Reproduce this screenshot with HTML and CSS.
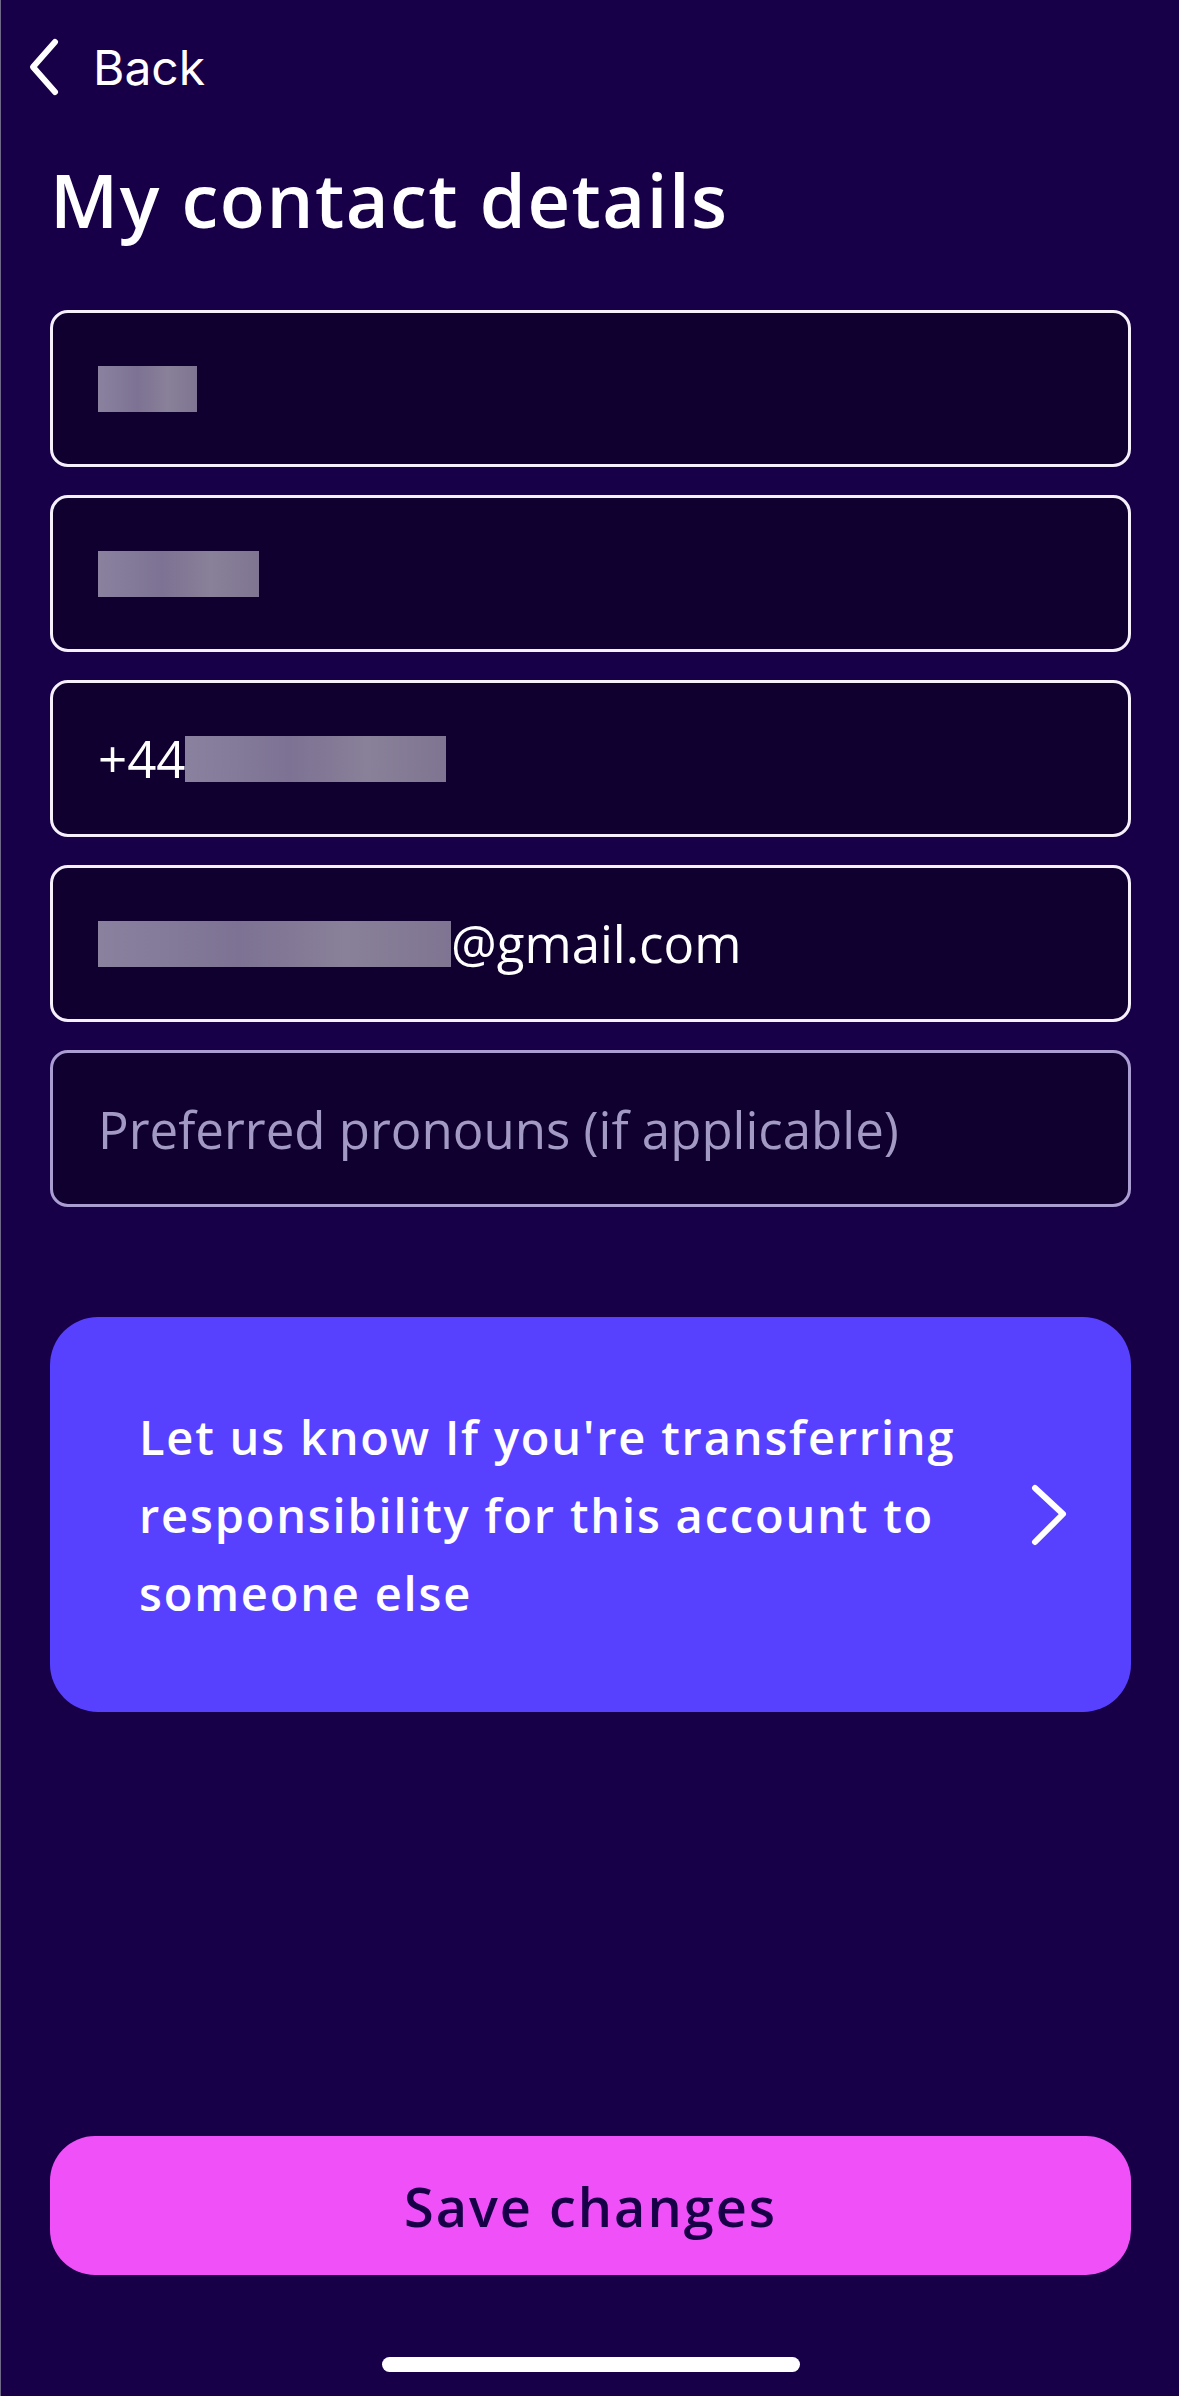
FILE: index.html
```html
<!DOCTYPE html>
<html lang="en">
<head>
    <meta charset="UTF-8">
    <meta name="viewport" content="width=device-width, initial-scale=1.0">
    <title>My contact details</title>
    <link rel="stylesheet" href="styles.css">
</head>
<body>
    <div class="page">
        <a class="back" href="#">
            <svg class="back-icon" width="40" height="60" viewBox="0 0 40 60">
                <path d="M30 12 L8 37 L30 62" fill="none" stroke="#fff" stroke-width="6" stroke-linecap="round" stroke-linejoin="round" transform="translate(0 -7)"/>
            </svg>
            <span>Back</span>
        </a>

        <h1>My contact details</h1>

        <div class="fields">
            <div class="field"><span class="blur" style="width: 99px"></span></div>
            <div class="field"><span class="blur" style="width: 161px"></span></div>
            <div class="field"><span class="value">+44</span><span class="blur" style="width: 261px"></span></div>
            <div class="field"><span class="blur" style="width: 353px"></span><span class="value">@gmail.com</span></div>
            <div class="field empty"><span class="placeholder">Preferred pronouns (if applicable)</span></div>
        </div>

        <a class="transfer-card" href="#">
            <span class="transfer-text">Let us know If you're transferring responsibility for this account to someone else</span>
            <svg class="chevron" width="40" height="64" viewBox="0 0 40 64">
                <path d="M6 5 L34 31 L6 59" fill="none" stroke="#fff" stroke-width="6" stroke-linecap="round" stroke-linejoin="round"/>
            </svg>
        </a>

        <div class="footer">
            <button class="save-btn">Save changes</button>
            <div class="home-indicator"></div>
        </div>
    </div>
</body>
</html>
```

FILE: styles.css
```css
* {
    box-sizing: border-box;
}
body {
    margin: 0;
    padding: 0;
    background-color: #180048;
    color: #fff;
    font-family: 'Open Sans', sans-serif;
}
.page {
    width: 1179px;
    height: 2396px;
    display: flex;
    flex-direction: column;
    border-left: 1px solid #6f6788;
}
.back {
    display: flex;
    align-items: center;
    height: 134px;
    padding-left: 24px;
    color: #fff;
    text-decoration: none;
    font-family: 'Inter', sans-serif;
    font-size: 48px;
}
.back-icon {
    margin-right: 28px;
}
h1 {
    margin: 16px 0 0 0;
    padding-left: 49px;
    font-size: 74px;
    line-height: 100px;
    font-weight: 600;
    letter-spacing: 1.5px;
    color: #fff;
}
.fields {
    display: flex;
    flex-direction: column;
    gap: 28px;
    margin: 60px 48px 0 49px;
}
.field {
    height: 157px;
    border: 3px solid #f5f0fb;
    border-radius: 18px;
    background-color: #10002f;
    display: flex;
    align-items: center;
    padding-left: 45px;
    font-size: 51px;
}
.field.empty {
    border-color: #a99dd2;
}
.value {
    color: #fff;
    line-height: 1;
}
.placeholder {
    color: #a29ac4;
}
.blur {
    display: block;
    height: 46px;
    background: linear-gradient(90deg, #8a819f, #7d7293 40%, #898099 70%, #7f7592);
}
.transfer-card {
    display: flex;
    align-items: center;
    justify-content: space-between;
    height: 395px;
    margin: 110px 48px 0 49px;
    padding: 0 62px 0 89px;
    background-color: #5840ff;
    border-radius: 48px;
    color: #fff;
    text-decoration: none;
}
.transfer-text {
    max-width: 880px;
    font-size: 47px;
    line-height: 78px;
    font-weight: 600;
    letter-spacing: 1.8px;
}
.footer {
    margin-top: auto;
    display: flex;
    flex-direction: column;
    align-items: center;
    padding: 0 48px 24px 49px;
}
.save-btn {
    width: 100%;
    height: 139px;
    border: none;
    border-radius: 45px;
    background-color: #f050f8;
    color: #180048;
    font-family: 'Open Sans', sans-serif;
    font-size: 54px;
    font-weight: 600;
    letter-spacing: 2px;
    cursor: pointer;
}
.home-indicator {
    width: 418px;
    height: 15px;
    margin-top: 82px;
    border-radius: 8px;
    background-color: #fff;
}
```
